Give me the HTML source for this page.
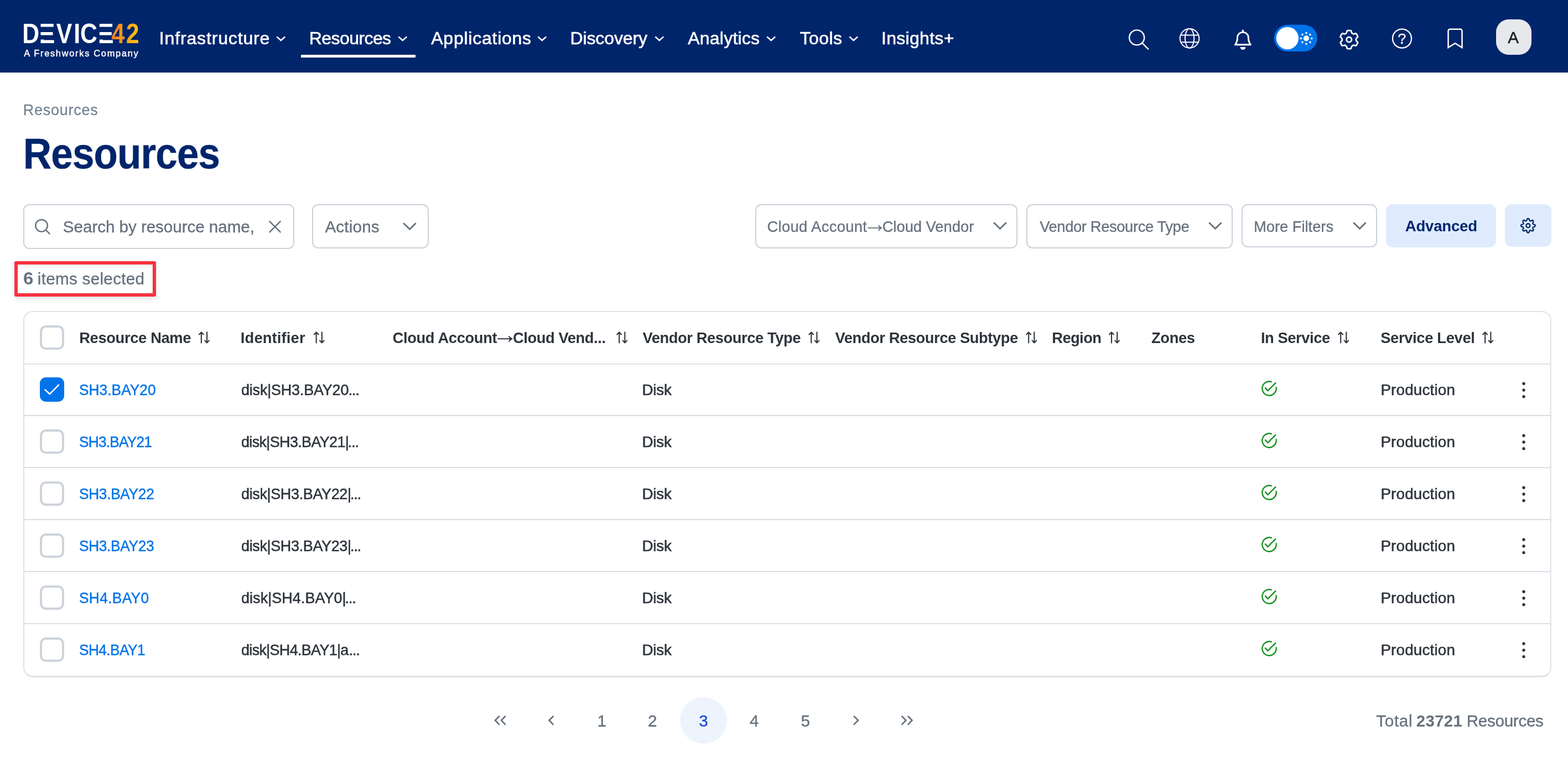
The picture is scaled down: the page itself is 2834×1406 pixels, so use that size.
<!DOCTYPE html>
<html lang="en"><head><meta charset="utf-8"><title>Resources - Device42</title>
<style>
*{box-sizing:border-box;margin:0;padding:0}
html,body{width:2834px;height:1406px;overflow:hidden;background:#fff}
body{position:relative;font-family:"Liberation Sans",Arial,sans-serif;}
.t{position:absolute;white-space:nowrap;line-height:1;display:block}
.t::before{content:"";display:inline-block;width:0;height:100px}
.ic{position:absolute;overflow:visible}
.box{position:absolute;border:2px solid #CBD2DA;border-radius:11px;background:#fff}
.abs{position:absolute}
main{position:absolute;left:0;top:0;width:2834px;height:1406px;will-change:transform}
header{will-change:transform;position:absolute;left:0;top:0;width:2834px;height:131px;background:#00256B;box-shadow:0 2px 0 #E3E6EB}
.cb{position:absolute;width:44px;height:44px;border:4px solid #CDD3DB;border-radius:11px;background:#fff}
.cb.on{border:none;background:#0073EA}
.sep{position:absolute;left:44px;width:2758px;height:2px;background:#DADDE3}
</style></head><body>

<header>
<div class="logo abs" style="left:0;top:0">
<svg class="ic" style="left:30px;top:30px" width="240" height="60" viewBox="30 30 240 60">
<defs><linearGradient id="og" x1="236" y1="0" x2="296" y2="0" gradientUnits="userSpaceOnUse"><stop offset="0" stop-color="#F47A20"/><stop offset="1" stop-color="#FFC412"/></linearGradient></defs>
<g font-family="Liberation Sans,Arial,sans-serif" font-weight="700" font-size="50.4">
<text transform="translate(0 78.2) scale(.85 1)" fill="#fff" x="47.34 83.31 119.83 156.89 170.48 208.13 237.17 267.96" y="0">DEVICE<tspan fill="url(#og)">42</tspan></text>
<g fill="#00256B"><rect x="72.8" y="48.56" width="7.9" height="9.44"/><rect x="72.8" y="63.56" width="7.9" height="7.88"/><rect x="178.8" y="48.56" width="8.2" height="9.44"/><rect x="178.8" y="63.56" width="8.2" height="7.88"/></g>
</g></svg>
<span class="t" style="left:43.26px;top:1.90px;font-size:16.4px;letter-spacing:1.710px;color:#fff;-webkit-text-stroke:.45px #fff;">A Freshworks Company</span>
</div>
<nav>
<span class="t" style="left:287.84px;top:-20.30px;font-size:32px;letter-spacing:0.849px;color:#fff;-webkit-text-stroke:.6px #fff;">Infrastructure</span>
<svg class="ic" style="left:498.30px;top:64.10px" width="19.50" height="15.00"><path d="M3 3 L9.75 9.00 L16.50 3" fill="none" stroke="#fff" stroke-width="2.5" stroke-linecap="round" stroke-linejoin="miter"/></svg>
<span class="t" style="left:558.84px;top:-20.30px;font-size:32px;letter-spacing:-0.585px;color:#fff;-webkit-text-stroke:.6px #fff;">Resources</span>
<svg class="ic" style="left:717.70px;top:64.10px" width="19.50" height="15.00"><path d="M3 3 L9.75 9.00 L16.50 3" fill="none" stroke="#fff" stroke-width="2.5" stroke-linecap="round" stroke-linejoin="miter"/></svg>
<span class="t" style="left:779.22px;top:-20.30px;font-size:32px;letter-spacing:0.759px;color:#fff;-webkit-text-stroke:.6px #fff;">Applications</span>
<svg class="ic" style="left:969.80px;top:64.10px" width="19.50" height="15.00"><path d="M3 3 L9.75 9.00 L16.50 3" fill="none" stroke="#fff" stroke-width="2.5" stroke-linecap="round" stroke-linejoin="miter"/></svg>
<span class="t" style="left:1030.44px;top:-20.30px;font-size:32px;letter-spacing:-0.104px;color:#fff;-webkit-text-stroke:.6px #fff;">Discovery</span>
<svg class="ic" style="left:1181.70px;top:64.10px" width="19.50" height="15.00"><path d="M3 3 L9.75 9.00 L16.50 3" fill="none" stroke="#fff" stroke-width="2.5" stroke-linecap="round" stroke-linejoin="miter"/></svg>
<span class="t" style="left:1243.32px;top:-20.30px;font-size:32px;letter-spacing:0.206px;color:#fff;-webkit-text-stroke:.6px #fff;">Analytics</span>
<svg class="ic" style="left:1384.40px;top:64.10px" width="19.50" height="15.00"><path d="M3 3 L9.75 9.00 L16.50 3" fill="none" stroke="#fff" stroke-width="2.5" stroke-linecap="round" stroke-linejoin="miter"/></svg>
<span class="t" style="left:1445.68px;top:-20.30px;font-size:32px;letter-spacing:0.433px;color:#fff;-webkit-text-stroke:.6px #fff;">Tools</span>
<svg class="ic" style="left:1533.10px;top:64.10px" width="19.50" height="15.00"><path d="M3 3 L9.75 9.00 L16.50 3" fill="none" stroke="#fff" stroke-width="2.5" stroke-linecap="round" stroke-linejoin="miter"/></svg>
<span class="t" style="left:1592.94px;top:-20.30px;font-size:32px;letter-spacing:0.307px;color:#fff;-webkit-text-stroke:.6px #fff;">Insights+</span>
<div class="abs" style="left:544px;top:99px;width:207px;height:4.5px;background:#fff"></div>
</nav>
<svg class="ic" style="left:2000px;top:20px" width="834" height="100" viewBox="2000 20 834 100" fill="none" stroke="#fff" stroke-linecap="round" stroke-linejoin="round">
<circle cx="2054.65" cy="67.9" r="13.5" stroke-width="2.4"/><path d="M2064.3 77.6 L2075.2 88.6" stroke-width="2.4"/>
<g stroke-width="2"><circle cx="2150" cy="69.35" r="17.3"/><ellipse cx="2150" cy="69.35" rx="8.2" ry="17.3"/><path d="M2134 63.4 H2166 M2134 76.3 H2166" stroke-linecap="butt"/></g>
<path d="M2232.4 80.8 H2260.4 C2257.4 77 2256.3 73 2256.3 68 C2256.3 62 2252 58.4 2246.4 58.4 C2240.8 58.4 2236.5 62 2236.5 68 C2236.5 73 2235.4 77 2232.4 80.8 Z" stroke-width="2.9"/>
<path d="M2246.4 57 V55.1" stroke-width="3.4"/><path d="M2241.5 85.1 H2251.3 A4.9 4.9 0 0 1 2241.5 85.1 Z" fill="#fff" stroke="none"/>
<rect x="2302.8" y="44.8" width="78.1" height="48.3" rx="24.15" fill="#0073EA" stroke="none"/><circle cx="2326.9" cy="69" r="20.2" fill="#fff" stroke="none"/>
<g fill="#fff" stroke="none"><circle cx="2360.9" cy="69.4" r="5.1"/>
<circle cx="2370.70" cy="69.40" r="1.8"/>
<circle cx="2367.83" cy="76.33" r="1.8"/>
<circle cx="2360.90" cy="79.20" r="1.8"/>
<circle cx="2353.97" cy="76.33" r="1.8"/>
<circle cx="2351.10" cy="69.40" r="1.8"/>
<circle cx="2353.97" cy="62.47" r="1.8"/>
<circle cx="2360.90" cy="59.60" r="1.8"/>
<circle cx="2367.83" cy="62.47" r="1.8"/>
</g>
<path d="M2432.39 60.51 Q2433.80 59.69 2434.11 58.09 L2434.44 56.35 Q2434.69 55.05 2436.02 55.05 L2440.68 55.05 Q2442.01 55.05 2442.26 56.35 L2442.59 58.09 Q2442.90 59.69 2444.31 60.51 L2444.93 60.87 Q2446.34 61.68 2447.88 61.15 L2449.56 60.57 Q2450.81 60.13 2451.47 61.28 L2453.81 65.32 Q2454.47 66.47 2453.47 67.33 L2452.13 68.50 Q2450.89 69.56 2450.89 71.19 L2450.89 71.91 Q2450.89 73.54 2452.13 74.60 L2453.47 75.77 Q2454.47 76.63 2453.81 77.78 L2451.47 81.82 Q2450.81 82.97 2449.56 82.53 L2447.88 81.95 Q2446.34 81.42 2444.93 82.23 L2444.31 82.59 Q2442.90 83.41 2442.59 85.01 L2442.26 86.75 Q2442.01 88.05 2440.68 88.05 L2436.02 88.05 Q2434.69 88.05 2434.44 86.75 L2434.11 85.01 Q2433.80 83.41 2432.39 82.59 L2431.77 82.23 Q2430.36 81.42 2428.82 81.95 L2427.14 82.53 Q2425.89 82.97 2425.23 81.82 L2422.89 77.78 Q2422.23 76.63 2423.23 75.77 L2424.57 74.60 Q2425.81 73.54 2425.81 71.91 L2425.81 71.19 Q2425.81 69.56 2424.57 68.50 L2423.23 67.33 Q2422.23 66.47 2422.89 65.32 L2425.23 61.28 Q2425.89 60.13 2427.14 60.57 L2428.82 61.15 Q2430.36 61.68 2431.77 60.87 Z" stroke-width="2.8"/><circle cx="2438.3" cy="71.6" r="4.6" stroke-width="2.8"/>
<circle cx="2534" cy="69.6" r="17.05" stroke-width="2.3"/>
<path d="M2528.7 66.2 C2528.7 63.4 2531 62.1 2534 62.1 C2537.2 62.1 2539.4 63.7 2539.4 66.1 C2539.4 69.7 2534 69.3 2534 73.3" stroke-width="2.5"/><circle cx="2533.8" cy="77.5" r="1.9" fill="#fff" stroke="none"/>
<path d="M2617.5 86 V56 A3.2 3.2 0 0 1 2620.7 52.8 H2639.3 A3.2 3.2 0 0 1 2642.5 56 V86 L2630 78.2 Z" stroke-width="2.5" stroke-linejoin="miter"/>
</svg>
<div class="abs" style="left:2703.8px;top:34.8px;width:64.3px;height:64px;border-radius:23px;background:#E6E8EC"></div>
<span class="t" style="left:2725.33px;top:-22.20px;font-size:29.6px;letter-spacing:-0.110px;color:#1B1B1B;-webkit-text-stroke:.5px #1B1B1B;">A</span>
</header>
<main>
<span class="t" style="left:41.74px;top:107.50px;font-size:27px;letter-spacing:0.756px;color:#738493;-webkit-text-stroke:0.3px;">Resources</span>
<h1><span class="t" style="left:41.90px;top:204.00px;font-size:77px;letter-spacing:-0.863px;color:#00256B;font-weight:700;transform:scaleX(0.92);transform-origin:0 0;-webkit-text-stroke:.5px #00256B;">Resources</span></h1>
<div class="box" style="left:42px;top:369px;width:490px;height:81px"></div>
<svg class="ic" style="left:55px;top:390px" width="50" height="40" viewBox="55 390 50 40" fill="none" stroke="#67717D" stroke-width="2.4" stroke-linecap="round"><circle cx="75.05" cy="407.8" r="10.8"/><path d="M82.8 415.6 L89.6 422.4"/></svg>
<span class="t" style="left:113.87px;top:320.20px;font-size:29.6px;letter-spacing:-0.045px;color:#67717D;-webkit-text-stroke:0.35px;">Search by resource name,</span>
<svg class="ic" style="left:480px;top:395px" width="34" height="32" viewBox="480 395 34 32" fill="none" stroke="#67717D" stroke-width="2.5" stroke-linecap="round"><path d="M487.4 400.1 L506.6 419.4 M506.6 400.1 L487.4 419.4"/></svg>
<div class="box" style="left:564px;top:369px;width:211px;height:80px"></div>
<span class="t" style="left:587.43px;top:320.20px;font-size:29.6px;letter-spacing:0.190px;color:#67717D;-webkit-text-stroke:0.35px;">Actions</span>
<svg class="ic" style="left:726.60px;top:400.80px" width="26.90" height="19.30"><path d="M3 3 L13.45 13.30 L23.90 3" fill="none" stroke="#67717D" stroke-width="2.9" stroke-linecap="round" stroke-linejoin="miter"/></svg>
<div class="box" style="left:1365px;top:369px;width:474px;height:80px"></div>
<span><span class="t" style="left:1386.43px;top:319.30px;font-size:27.4px;letter-spacing:0.326px;color:#67717D;-webkit-text-stroke:0.3px;">Cloud Account</span><span class="t" style="left:1559.51px;top:319.30px;font-size:43.58px;color:#67717D;">→</span><span class="t" style="left:1594.63px;top:319.30px;font-size:27.4px;letter-spacing:-0.032px;color:#67717D;-webkit-text-stroke:0.3px;">Cloud Vendor</span></span>
<svg class="ic" style="left:1793.65px;top:400.00px" width="26.90" height="19.30"><path d="M3 3 L13.45 13.30 L23.90 3" fill="none" stroke="#67717D" stroke-width="2.9" stroke-linecap="round" stroke-linejoin="miter"/></svg>
<div class="box" style="left:1855px;top:369px;width:372.5px;height:80px"></div>
<span class="t" style="left:1879.16px;top:319.30px;font-size:27.4px;letter-spacing:-0.401px;color:#67717D;-webkit-text-stroke:0.3px;">Vendor Resource Type</span>
<svg class="ic" style="left:2182.90px;top:400.00px" width="26.90" height="19.30"><path d="M3 3 L13.45 13.30 L23.90 3" fill="none" stroke="#67717D" stroke-width="2.9" stroke-linecap="round" stroke-linejoin="miter"/></svg>
<div class="box" style="left:2244px;top:369px;width:245px;height:78px"></div>
<span class="t" style="left:2266.11px;top:319.30px;font-size:27.4px;letter-spacing:-0.053px;color:#67717D;-webkit-text-stroke:0.3px;">More Filters</span>
<svg class="ic" style="left:2443.50px;top:400.00px" width="26.90" height="19.30"><path d="M3 3 L13.45 13.30 L23.90 3" fill="none" stroke="#67717D" stroke-width="2.9" stroke-linecap="round" stroke-linejoin="miter"/></svg>
<div class="abs" style="left:2505px;top:369px;width:199px;height:78px;border-radius:12px;background:#DFEBFD"></div>
<span class="t" style="left:2539.81px;top:318.40px;font-size:27.6px;letter-spacing:-0.229px;color:#00256B;font-weight:700;">Advanced</span>
<div class="abs" style="left:2720px;top:369px;width:84px;height:77px;border-radius:12px;background:#DFEBFD"></div>
<svg class="ic" style="left:2740px;top:388px" width="44" height="44" viewBox="2740 388 44 44" fill="none" stroke="#00256B" stroke-width="2.35" stroke-linejoin="round"><path d="M2758.41 399.31 Q2759.44 398.88 2759.80 397.05 L2759.85 396.79 Q2760.22 394.96 2761.90 394.96 L2761.90 394.96 Q2763.58 394.96 2763.95 396.79 L2764.00 397.05 Q2764.36 398.88 2765.39 399.31 L2765.39 399.31 Q2766.43 399.74 2767.98 398.70 L2768.20 398.55 Q2769.75 397.52 2770.94 398.71 L2770.94 398.71 Q2772.13 399.90 2771.10 401.45 L2770.95 401.67 Q2769.91 403.22 2770.34 404.26 L2770.34 404.26 Q2770.77 405.29 2772.60 405.65 L2772.86 405.70 Q2774.69 406.07 2774.69 407.75 L2774.69 407.75 Q2774.69 409.43 2772.86 409.80 L2772.60 409.85 Q2770.77 410.21 2770.34 411.24 L2770.34 411.24 Q2769.91 412.28 2770.95 413.83 L2771.10 414.05 Q2772.13 415.60 2770.94 416.79 L2770.94 416.79 Q2769.75 417.98 2768.20 416.95 L2767.98 416.80 Q2766.43 415.76 2765.39 416.19 L2765.39 416.19 Q2764.36 416.62 2764.00 418.45 L2763.95 418.71 Q2763.58 420.54 2761.90 420.54 L2761.90 420.54 Q2760.22 420.54 2759.85 418.71 L2759.80 418.45 Q2759.44 416.62 2758.41 416.19 L2758.41 416.19 Q2757.37 415.76 2755.82 416.80 L2755.60 416.95 Q2754.05 417.98 2752.86 416.79 L2752.86 416.79 Q2751.67 415.60 2752.70 414.05 L2752.85 413.83 Q2753.89 412.28 2753.46 411.24 L2753.46 411.24 Q2753.03 410.21 2751.20 409.85 L2750.94 409.80 Q2749.11 409.43 2749.11 407.75 L2749.11 407.75 Q2749.11 406.07 2750.94 405.70 L2751.20 405.65 Q2753.03 405.29 2753.46 404.26 L2753.46 404.26 Q2753.89 403.22 2752.85 401.67 L2752.70 401.45 Q2751.67 399.90 2752.86 398.71 L2752.86 398.71 Q2754.05 397.52 2755.60 398.55 L2755.82 398.70 Q2757.37 399.74 2758.41 399.31 Z"/><circle cx="2761.9" cy="407.75" r="3.55"/></svg>
<div class="abs" style="left:26px;top:472px;width:256px;height:64.3px;border:6px solid #F7323F;border-radius:3px;box-shadow:0 3px 8px rgba(40,50,70,.16), inset 0 2px 6px rgba(40,50,70,.12)"></div>
<span class="t" style="left:41.84px;top:414.20px;font-size:30.6px;letter-spacing:0.437px;color:#67717D;font-weight:700;transform:scaleX(1.08);transform-origin:0 0;">6</span>
<span class="t" style="left:67.78px;top:414.20px;font-size:29.6px;letter-spacing:0.316px;color:#67717D;-webkit-text-stroke:0.35px;">items selected</span>
<div class="abs" style="left:42px;top:562px;width:2762px;height:661.7px;border:2px solid #E0E4E9;border-bottom:3.8px solid #DEE1E7;border-radius:17px;background:#fff"></div>
<div class="sep" style="top:657px;background:#E1E3E8"></div>
<div class="sep" style="top:750px"></div>
<div class="sep" style="top:844px"></div>
<div class="sep" style="top:938px"></div>
<div class="sep" style="top:1032px"></div>
<div class="sep" style="top:1126px"></div>
<div class="cb" style="left:72px;top:588px"></div>
<span class="t" style="left:143.23px;top:519.70px;font-size:27.3px;letter-spacing:-0.340px;color:#2E343C;font-weight:700;">Resource Name</span>
<span class="t" style="left:434.83px;top:519.70px;font-size:27.3px;letter-spacing:0.164px;color:#2E343C;font-weight:700;">Identifier</span>
<span><span class="t" style="left:709.51px;top:519.70px;font-size:27.3px;letter-spacing:-0.327px;color:#2E343C;font-weight:700;">Cloud Account</span><span class="t" style="left:890.36px;top:519.70px;font-size:45.27px;color:#2E343C;font-weight:700;">→</span><span class="t" style="left:926.91px;top:519.70px;font-size:27.3px;letter-spacing:-0.397px;color:#2E343C;font-weight:700;">Cloud Vend...</span></span>
<span class="t" style="left:1161.50px;top:519.70px;font-size:27.3px;letter-spacing:-0.416px;color:#2E343C;font-weight:700;">Vendor Resource Type</span>
<span class="t" style="left:1509.40px;top:519.70px;font-size:27.3px;letter-spacing:-0.405px;color:#2E343C;font-weight:700;">Vendor Resource Subtype</span>
<span class="t" style="left:1901.23px;top:519.70px;font-size:27.3px;letter-spacing:-0.556px;color:#2E343C;font-weight:700;">Region</span>
<span class="t" style="left:2080.98px;top:519.70px;font-size:27.3px;letter-spacing:-0.338px;color:#2E343C;font-weight:700;">Zones</span>
<span class="t" style="left:2278.93px;top:519.70px;font-size:27.3px;letter-spacing:-0.412px;color:#2E343C;font-weight:700;">In Service</span>
<span class="t" style="left:2495.15px;top:519.70px;font-size:27.3px;letter-spacing:-0.315px;color:#2E343C;font-weight:700;">Service Level</span>
<svg class="ic" style="left:0;top:590px" width="2834" height="40" viewBox="0 590 2834 40"><path d="M363.86 619.60 V600.60 M359.90 604.50 L363.86 600.40 L367.80 604.50 M374.03 600.40 V619.40 M370.20 615.40 L374.03 619.50 L377.90 615.40" fill="none" stroke="#2E343C" stroke-width="2.1" stroke-linecap="round" stroke-linejoin="round"/><path d="M571.66 619.60 V600.60 M567.70 604.50 L571.66 600.40 L575.60 604.50 M581.83 600.40 V619.40 M578.00 615.40 L581.83 619.50 L585.70 615.40" fill="none" stroke="#2E343C" stroke-width="2.1" stroke-linecap="round" stroke-linejoin="round"/><path d="M1119.16 619.60 V600.60 M1115.20 604.50 L1119.16 600.40 L1123.10 604.50 M1129.33 600.40 V619.40 M1125.50 615.40 L1129.33 619.50 L1133.20 615.40" fill="none" stroke="#2E343C" stroke-width="2.1" stroke-linecap="round" stroke-linejoin="round"/><path d="M1466.26 619.60 V600.60 M1462.30 604.50 L1466.26 600.40 L1470.20 604.50 M1476.43 600.40 V619.40 M1472.60 615.40 L1476.43 619.50 L1480.30 615.40" fill="none" stroke="#2E343C" stroke-width="2.1" stroke-linecap="round" stroke-linejoin="round"/><path d="M1859.16 619.60 V600.60 M1855.20 604.50 L1859.16 600.40 L1863.10 604.50 M1869.33 600.40 V619.40 M1865.50 615.40 L1869.33 619.50 L1873.20 615.40" fill="none" stroke="#2E343C" stroke-width="2.1" stroke-linecap="round" stroke-linejoin="round"/><path d="M2008.96 619.60 V600.60 M2005.00 604.50 L2008.96 600.40 L2012.90 604.50 M2019.13 600.40 V619.40 M2015.30 615.40 L2019.13 619.50 L2023.00 615.40" fill="none" stroke="#2E343C" stroke-width="2.1" stroke-linecap="round" stroke-linejoin="round"/><path d="M2423.16 619.60 V600.60 M2419.20 604.50 L2423.16 600.40 L2427.10 604.50 M2433.33 600.40 V619.40 M2429.50 615.40 L2433.33 619.50 L2437.20 615.40" fill="none" stroke="#2E343C" stroke-width="2.1" stroke-linecap="round" stroke-linejoin="round"/><path d="M2684.16 619.60 V600.60 M2680.20 604.50 L2684.16 600.40 L2688.10 604.50 M2694.33 600.40 V619.40 M2690.50 615.40 L2694.33 619.50 L2698.20 615.40" fill="none" stroke="#2E343C" stroke-width="2.1" stroke-linecap="round" stroke-linejoin="round"/></svg>
<div class="cb on" style="left:72px;top:682.00px"><svg width="44" height="44" viewBox="72 682 44 44" fill="none" stroke="#fff" stroke-width="2.6" stroke-linecap="round" stroke-linejoin="round"><path d="M81.6 704.4 L90 712.2 L106 695.6"/></svg></div>
<a class="t" style="left:143.42px;top:613.90px;font-size:27.8px;letter-spacing:0.047px;color:#0073EA;-webkit-text-stroke:0.45px;transform:scaleX(0.945);transform-origin:0 0;">SH3.BAY20</a>
<span><span class="t" style="left:435.52px;top:613.90px;font-size:27.8px;letter-spacing:-0.194px;color:#2E343C;-webkit-text-stroke:0.55px;transform:scaleX(0.97);transform-origin:0 0;">disk|SH3.BAY20</span><span class="t" style="left:629.40px;top:613.90px;font-size:27.8px;letter-spacing:-1.280px;color:#2E343C;-webkit-text-stroke:0.55px;">...</span></span>
<span class="t" style="left:1160.48px;top:613.90px;font-size:27.8px;letter-spacing:-0.233px;color:#2E343C;-webkit-text-stroke:0.55px;">Disk</span>
<span class="t" style="left:2495.38px;top:613.90px;font-size:27.8px;letter-spacing:0.187px;color:#2E343C;-webkit-text-stroke:0.55px;">Production</span>
<svg class="ic" style="left:2276.1px;top:683.70px" width="36" height="36" viewBox="-18 -18 36 36" fill="none" stroke="#14901C" stroke-width="2.35" stroke-linecap="round" stroke-linejoin="round"><path d="M3.92 -12.08 A12.7 12.7 0 1 0 12.58 -1.77"/><path d="M-7.04 -0.86 L-2.54 4.2 L11.34 -9.86"/></svg>
<svg class="ic" style="left:2744px;top:685.20px" width="20" height="40" viewBox="-10 -20 20 40" fill="#2E343C"><circle cx="0" cy="-11.8" r="2.7"/><circle cx="0" cy="0" r="2.7"/><circle cx="0" cy="11.8" r="2.7"/></svg>
<div class="cb" style="left:72px;top:776.10px"></div>
<a class="t" style="left:143.42px;top:708.00px;font-size:27.8px;letter-spacing:-0.831px;color:#0073EA;-webkit-text-stroke:0.45px;transform:scaleX(0.945);transform-origin:0 0;">SH3.BAY21</a>
<span><span class="t" style="left:435.52px;top:708.00px;font-size:27.8px;letter-spacing:-0.665px;color:#2E343C;-webkit-text-stroke:0.55px;transform:scaleX(0.97);transform-origin:0 0;">disk|SH3.BAY21|</span><span class="t" style="left:628.50px;top:708.00px;font-size:27.8px;letter-spacing:-1.280px;color:#2E343C;-webkit-text-stroke:0.55px;">...</span></span>
<span class="t" style="left:1160.48px;top:708.00px;font-size:27.8px;letter-spacing:-0.233px;color:#2E343C;-webkit-text-stroke:0.55px;">Disk</span>
<span class="t" style="left:2495.38px;top:708.00px;font-size:27.8px;letter-spacing:0.187px;color:#2E343C;-webkit-text-stroke:0.55px;">Production</span>
<svg class="ic" style="left:2276.1px;top:777.80px" width="36" height="36" viewBox="-18 -18 36 36" fill="none" stroke="#14901C" stroke-width="2.35" stroke-linecap="round" stroke-linejoin="round"><path d="M3.92 -12.08 A12.7 12.7 0 1 0 12.58 -1.77"/><path d="M-7.04 -0.86 L-2.54 4.2 L11.34 -9.86"/></svg>
<svg class="ic" style="left:2744px;top:779.30px" width="20" height="40" viewBox="-10 -20 20 40" fill="#2E343C"><circle cx="0" cy="-11.8" r="2.7"/><circle cx="0" cy="0" r="2.7"/><circle cx="0" cy="11.8" r="2.7"/></svg>
<div class="cb" style="left:72px;top:870.10px"></div>
<a class="t" style="left:143.42px;top:802.00px;font-size:27.8px;letter-spacing:-0.329px;color:#0073EA;-webkit-text-stroke:0.45px;transform:scaleX(0.945);transform-origin:0 0;">SH3.BAY22</a>
<span><span class="t" style="left:435.52px;top:802.00px;font-size:27.8px;letter-spacing:-0.356px;color:#2E343C;-webkit-text-stroke:0.55px;transform:scaleX(0.97);transform-origin:0 0;">disk|SH3.BAY22|</span><span class="t" style="left:632.70px;top:802.00px;font-size:27.8px;letter-spacing:-1.280px;color:#2E343C;-webkit-text-stroke:0.55px;">...</span></span>
<span class="t" style="left:1160.48px;top:802.00px;font-size:27.8px;letter-spacing:-0.233px;color:#2E343C;-webkit-text-stroke:0.55px;">Disk</span>
<span class="t" style="left:2495.38px;top:802.00px;font-size:27.8px;letter-spacing:0.187px;color:#2E343C;-webkit-text-stroke:0.55px;">Production</span>
<svg class="ic" style="left:2276.1px;top:871.80px" width="36" height="36" viewBox="-18 -18 36 36" fill="none" stroke="#14901C" stroke-width="2.35" stroke-linecap="round" stroke-linejoin="round"><path d="M3.92 -12.08 A12.7 12.7 0 1 0 12.58 -1.77"/><path d="M-7.04 -0.86 L-2.54 4.2 L11.34 -9.86"/></svg>
<svg class="ic" style="left:2744px;top:873.30px" width="20" height="40" viewBox="-10 -20 20 40" fill="#2E343C"><circle cx="0" cy="-11.8" r="2.7"/><circle cx="0" cy="0" r="2.7"/><circle cx="0" cy="11.8" r="2.7"/></svg>
<div class="cb" style="left:72px;top:964.10px"></div>
<a class="t" style="left:143.42px;top:896.00px;font-size:27.8px;letter-spacing:-0.346px;color:#0073EA;-webkit-text-stroke:0.45px;transform:scaleX(0.945);transform-origin:0 0;">SH3.BAY23</a>
<span><span class="t" style="left:435.52px;top:896.00px;font-size:27.8px;letter-spacing:-0.356px;color:#2E343C;-webkit-text-stroke:0.55px;transform:scaleX(0.97);transform-origin:0 0;">disk|SH3.BAY23|</span><span class="t" style="left:632.70px;top:896.00px;font-size:27.8px;letter-spacing:-1.280px;color:#2E343C;-webkit-text-stroke:0.55px;">...</span></span>
<span class="t" style="left:1160.48px;top:896.00px;font-size:27.8px;letter-spacing:-0.233px;color:#2E343C;-webkit-text-stroke:0.55px;">Disk</span>
<span class="t" style="left:2495.38px;top:896.00px;font-size:27.8px;letter-spacing:0.187px;color:#2E343C;-webkit-text-stroke:0.55px;">Production</span>
<svg class="ic" style="left:2276.1px;top:965.80px" width="36" height="36" viewBox="-18 -18 36 36" fill="none" stroke="#14901C" stroke-width="2.35" stroke-linecap="round" stroke-linejoin="round"><path d="M3.92 -12.08 A12.7 12.7 0 1 0 12.58 -1.77"/><path d="M-7.04 -0.86 L-2.54 4.2 L11.34 -9.86"/></svg>
<svg class="ic" style="left:2744px;top:967.30px" width="20" height="40" viewBox="-10 -20 20 40" fill="#2E343C"><circle cx="0" cy="-11.8" r="2.7"/><circle cx="0" cy="0" r="2.7"/><circle cx="0" cy="11.8" r="2.7"/></svg>
<div class="cb" style="left:72px;top:1058.10px"></div>
<a class="t" style="left:143.42px;top:990.00px;font-size:27.8px;letter-spacing:0.372px;color:#0073EA;-webkit-text-stroke:0.45px;transform:scaleX(0.945);transform-origin:0 0;">SH4.BAY0</a>
<span><span class="t" style="left:435.52px;top:990.00px;font-size:27.8px;letter-spacing:0.060px;color:#2E343C;-webkit-text-stroke:0.55px;transform:scaleX(0.97);transform-origin:0 0;">disk|SH4.BAY0|</span><span class="t" style="left:623.30px;top:990.00px;font-size:27.8px;letter-spacing:-1.280px;color:#2E343C;-webkit-text-stroke:0.55px;">...</span></span>
<span class="t" style="left:1160.48px;top:990.00px;font-size:27.8px;letter-spacing:-0.233px;color:#2E343C;-webkit-text-stroke:0.55px;">Disk</span>
<span class="t" style="left:2495.38px;top:990.00px;font-size:27.8px;letter-spacing:0.187px;color:#2E343C;-webkit-text-stroke:0.55px;">Production</span>
<svg class="ic" style="left:2276.1px;top:1059.80px" width="36" height="36" viewBox="-18 -18 36 36" fill="none" stroke="#14901C" stroke-width="2.35" stroke-linecap="round" stroke-linejoin="round"><path d="M3.92 -12.08 A12.7 12.7 0 1 0 12.58 -1.77"/><path d="M-7.04 -0.86 L-2.54 4.2 L11.34 -9.86"/></svg>
<svg class="ic" style="left:2744px;top:1061.30px" width="20" height="40" viewBox="-10 -20 20 40" fill="#2E343C"><circle cx="0" cy="-11.8" r="2.7"/><circle cx="0" cy="0" r="2.7"/><circle cx="0" cy="11.8" r="2.7"/></svg>
<div class="cb" style="left:72px;top:1152.10px"></div>
<a class="t" style="left:143.42px;top:1084.00px;font-size:27.8px;letter-spacing:-0.616px;color:#0073EA;-webkit-text-stroke:0.45px;transform:scaleX(0.945);transform-origin:0 0;">SH4.BAY1</a>
<span><span class="t" style="left:435.52px;top:1084.00px;font-size:27.8px;letter-spacing:-0.701px;color:#2E343C;-webkit-text-stroke:0.55px;transform:scaleX(0.97);transform-origin:0 0;">disk|SH4.BAY1|a</span><span class="t" style="left:630.40px;top:1084.00px;font-size:27.8px;letter-spacing:-1.280px;color:#2E343C;-webkit-text-stroke:0.55px;">...</span></span>
<span class="t" style="left:1160.48px;top:1084.00px;font-size:27.8px;letter-spacing:-0.233px;color:#2E343C;-webkit-text-stroke:0.55px;">Disk</span>
<span class="t" style="left:2495.38px;top:1084.00px;font-size:27.8px;letter-spacing:0.187px;color:#2E343C;-webkit-text-stroke:0.55px;">Production</span>
<svg class="ic" style="left:2276.1px;top:1153.80px" width="36" height="36" viewBox="-18 -18 36 36" fill="none" stroke="#14901C" stroke-width="2.35" stroke-linecap="round" stroke-linejoin="round"><path d="M3.92 -12.08 A12.7 12.7 0 1 0 12.58 -1.77"/><path d="M-7.04 -0.86 L-2.54 4.2 L11.34 -9.86"/></svg>
<svg class="ic" style="left:2744px;top:1155.30px" width="20" height="40" viewBox="-10 -20 20 40" fill="#2E343C"><circle cx="0" cy="-11.8" r="2.7"/><circle cx="0" cy="0" r="2.7"/><circle cx="0" cy="11.8" r="2.7"/></svg>
<div class="abs" style="left:1229.4px;top:1259.7px;width:84.6px;height:84.6px;border-radius:50%;background:#EEF4FE"></div>
<span class="t" style="left:1079.48px;top:1213.30px;font-size:29.6px;letter-spacing:-2.002px;color:#67717D;-webkit-text-stroke:0.35px;">1</span>
<span class="t" style="left:1170.92px;top:1213.30px;font-size:29.6px;letter-spacing:0.058px;color:#67717D;-webkit-text-stroke:0.35px;">2</span>
<span class="t" style="left:1263.19px;top:1213.30px;font-size:29.6px;letter-spacing:0.640px;color:#1D4FD8;-webkit-text-stroke:0.35px;">3</span>
<span class="t" style="left:1354.93px;top:1213.30px;font-size:29.6px;letter-spacing:0.452px;color:#67717D;-webkit-text-stroke:0.35px;">4</span>
<span class="t" style="left:1447.42px;top:1213.30px;font-size:29.6px;letter-spacing:-0.060px;color:#67717D;-webkit-text-stroke:0.35px;">5</span>
<svg class="ic" style="left:880px;top:1280px" width="800" height="44" viewBox="880 1280 800 44" fill="none" stroke="#67717D" stroke-width="2.7" stroke-linecap="round" stroke-linejoin="miter"><path d="M902 1294.7 L894.95 1301.8 L902 1309.1 M913 1294.7 L906.05 1301.8 L913 1309.1"/><path d="M999.6 1294.8 L992.5 1301.8 L999.6 1309.1"/><path d="M1543.8 1294.8 L1550.9 1301.8 L1543.8 1309.1"/><path d="M1630.4 1294.7 L1637.35 1301.8 L1630.4 1309.1 M1641.4 1294.7 L1648.45 1301.8 L1641.4 1309.1"/></svg>
<span class="t" style="left:2487.33px;top:1213.00px;font-size:29.6px;letter-spacing:0.682px;color:#67717D;-webkit-text-stroke:0.35px;">Total</span>
<span class="t" style="left:2559.77px;top:1213.00px;font-size:29.4px;letter-spacing:0.335px;color:#67717D;font-weight:700;">23721</span>
<span class="t" style="left:2650.73px;top:1213.00px;font-size:29.6px;letter-spacing:-0.285px;color:#67717D;-webkit-text-stroke:0.35px;">Resources</span>
</main>
</body></html>
